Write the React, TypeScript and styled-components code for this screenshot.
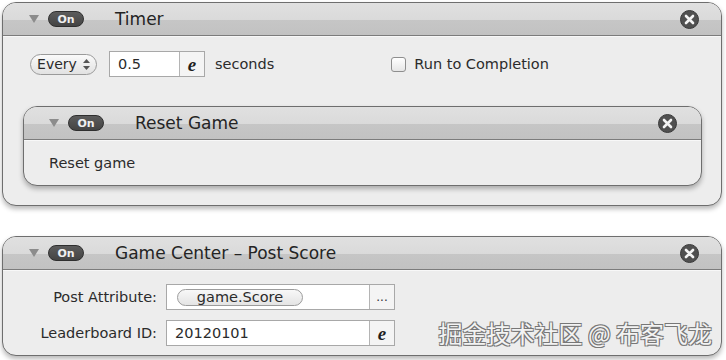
import styled, { createGlobalStyle } from 'styled-components';

const GlobalStyle = createGlobalStyle`
  html, body {
    margin: 0;
    background: #ffffff;
  }

  body {
    font-family: 'DejaVu Sans', 'Liberation Sans', sans-serif;
    color: #2b2b2b;
  }
`;

const Caret = () => (
  <svg width='10' height='8' viewBox='0 0 10 8'>
    <polygon points='0,0 10,0 5,8' fill='#8c8c8c' />
  </svg>
);

const CloseIcon = () => (
  <svg width='19' height='19' viewBox='0 0 19 19'>
    <circle cx='9.5' cy='9.5' r='9' fill='#505050' stroke='#3a3a3a' strokeWidth='1' />
    <path d='M6 6 L13 13 M13 6 L6 13' stroke='#f4f4f4' strokeWidth='2.6' strokeLinecap='round' />
  </svg>
);

const Stepper = () => (
  <svg width='7' height='11' viewBox='0 0 7 11'>
    <polygon points='3.5,0 7,4 0,4' fill='#555' />
    <polygon points='0,7 7,7 3.5,11' fill='#555' />
  </svg>
);

const Block = ({ title, inner, children }: { title: string; inner?: boolean; children: React.ReactNode }) => (
  <Card $inner={inner}>
    <Header $inner={inner}>
      <Caret />
      <Toggle>On</Toggle>
      <Title>{title}</Title>
      <Close>
        <CloseIcon />
      </Close>
    </Header>
    {children}
  </Card>
);

const App = () => {
  return (
    <>
      <GlobalStyle />
      <Page>
        <Block title='Timer'>
          <TimerBody>
            <Row>
              <PopUp>
                Every <Stepper />
              </PopUp>
              <Field $width={96}>
                <Value>0.5</Value>
                <FieldButton>
                  <ScriptE>e</ScriptE>
                </FieldButton>
              </Field>
              <span>seconds</span>
              <CheckLabel>
                <CheckBox />
                Run to Completion
              </CheckLabel>
            </Row>
            <Block title='Reset Game' inner>
              <InnerBody>Reset game</InnerBody>
            </Block>
          </TimerBody>
        </Block>

        <Block title='Game Center – Post Score'>
          <FormBody>
            <FormRow>
              <Label>Post Attribute:</Label>
              <Field $width={229}>
                <Value>
                  <Token>game.Score</Token>
                </Value>
                <FieldButton>...</FieldButton>
              </Field>
            </FormRow>
            <FormRow>
              <Label>Leaderboard ID:</Label>
              <Field $width={229}>
                <Value>20120101</Value>
                <FieldButton>
                  <ScriptE>e</ScriptE>
                </FieldButton>
              </Field>
              <Watermark>掘金技术社区 @ 布客飞龙</Watermark>
            </FormRow>
          </FormBody>
        </Block>
      </Page>
    </>
  );
};

const Page = styled.div`
  width: 726px;
  height: 360px;
  overflow: hidden;
  box-sizing: border-box;
  padding: 2px 4px 0 2px;
  display: flex;
  flex-direction: column;
  gap: 30px;
`;

const Card = styled.section<{ $inner?: boolean }>`
  flex-shrink: 0;
  border: 1px solid #6e6e6e;
  border-radius: 14px;
  background: #ededed;
  box-shadow: 0 3px 5px rgba(0, 0, 0, 0.28);
  overflow: hidden;
  margin: ${p => (p.$inner ? '0 19px 0 20px' : '0')};
`;

const Header = styled.header<{ $inner?: boolean }>`
  height: 33px;
  box-sizing: border-box;
  display: flex;
  align-items: center;
  padding: 0 ${p => (p.$inner ? '24px' : '22px')} 0 ${p => (p.$inner ? '25px' : '26px')};
  background: linear-gradient(#e0e0e0 0%, #dadada 52%, #c6c6c6 52%, #c2c2c2 100%);
  border-bottom: 1px solid #7c7c7c;
  box-shadow: 0 1px 0 #f8f8f8;
`;

const Toggle = styled.span`
  margin-left: 9px;
  width: 36px;
  height: 16px;
  box-sizing: border-box;
  border-radius: 8px;
  border: 1px solid #2f2f2f;
  background: linear-gradient(#5c5c5c, #444444);
  color: #f0f0f0;
  font-size: 11px;
  font-weight: bold;
  display: flex;
  align-items: center;
  justify-content: center;
`;

const Title = styled.h2`
  margin: 0 0 0 31px;
  font-size: 17px;
  font-weight: normal;
  color: #242424;
`;

const Close = styled.span`
  margin-left: auto;
  display: flex;
`;

const TimerBody = styled.div`
  padding: 15px 0 19px 0;
  display: flex;
  flex-direction: column;
  gap: 29px;
`;

const Row = styled.div`
  display: flex;
  align-items: center;
  height: 26px;
  padding-left: 27px;
  font-size: 14.5px;
  gap: 10px;
`;

const PopUp = styled.span`
  height: 21px;
  width: 67px;
  box-sizing: border-box;
  border: 1px solid #9a9a9a;
  border-radius: 11px;
  background: linear-gradient(#fafafa, #e2e2e2);
  display: flex;
  align-items: center;
  justify-content: center;
  gap: 6px;
  font-size: 14px;
  margin-right: 2px;
`;

const Field = styled.span<{ $width: number }>`
  width: ${p => p.$width}px;
  height: 26px;
  box-sizing: border-box;
  border: 1px solid #a8a8a8;
  background: #ffffff;
  display: flex;
  flex-shrink: 0;
`;

const Value = styled.span`
  flex: 1;
  display: flex;
  align-items: center;
  padding-left: 8px;
  font-size: 14.5px;
`;

const FieldButton = styled.span`
  width: 24px;
  border-left: 1px solid #b4b4b4;
  background: #f4f4f4;
  display: flex;
  align-items: center;
  justify-content: center;
  font-size: 12px;
  color: #333;
`;

const ScriptE = styled.span`
  font-family: 'Liberation Serif', serif;
  font-style: italic;
  font-weight: 900;
  font-size: 19px;
  line-height: 1;
  color: #1e1e1e;
`;

const CheckLabel = styled.label`
  margin-left: 107px;
  display: flex;
  align-items: center;
  gap: 8px;
`;

const CheckBox = styled.span`
  width: 15px;
  height: 15px;
  box-sizing: border-box;
  border: 1px solid #8e8e8e;
  border-radius: 3px;
  background: linear-gradient(#ffffff, #e6e6e6);
`;

const InnerBody = styled.div`
  height: 45px;
  display: flex;
  align-items: center;
  padding-left: 25px;
  font-size: 14.5px;
`;

const FormBody = styled.div`
  padding: 14px 0 9px;
  display: flex;
  flex-direction: column;
  gap: 10px;
`;

const FormRow = styled.div`
  display: flex;
  align-items: center;
  height: 26px;
  gap: 9px;
`;

const Label = styled.span`
  width: 154px;
  text-align: right;
  font-size: 14.5px;
`;

const Token = styled.span`
  width: 126px;
  height: 17px;
  box-sizing: border-box;
  border: 1px solid #9c9c9c;
  border-radius: 9px;
  background: linear-gradient(#f8f8f8, #e4e4e4);
  display: flex;
  align-items: center;
  justify-content: center;
  font-size: 14.5px;
  margin-left: 2px;
`;

const Watermark = styled.span`
  margin-left: auto;
  padding-right: 9px;
  font-family: 'Noto Sans CJK SC', sans-serif;
  font-size: 24px;
  line-height: 26px;
  color: #f3f3f3;
  text-shadow: -1px -1px 0 #777, 1px -1px 0 #777, -1px 1px 0 #777, 1px 1px 0 #777;
`;

export default App;
